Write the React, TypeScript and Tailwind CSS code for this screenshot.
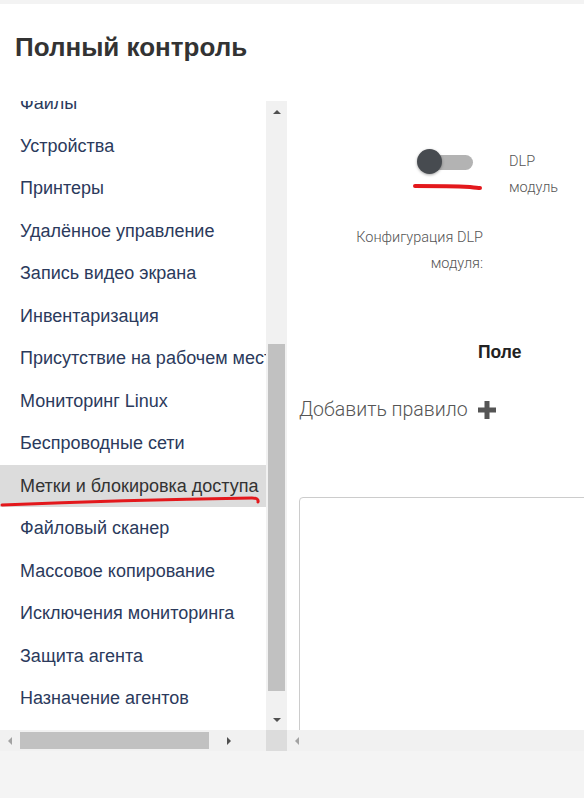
import React from 'react';

const items = [
  'Файлы',
  'Устройства',
  'Принтеры',
  'Удалённое управление',
  'Запись видео экрана',
  'Инвентаризация',
  'Присутствие на рабочем месте',
  'Мониторинг Linux',
  'Беспроводные сети',
  'Метки и блокировка доступа',
  'Файловый сканер',
  'Массовое копирование',
  'Исключения мониторинга',
  'Защита агента',
  'Назначение агентов',
];

const ACTIVE = 'Метки и блокировка доступа';

function Arrow({ dir, light }: { dir: 'up' | 'down' | 'left' | 'right'; light?: boolean }) {
  const fill = light ? '#a3a3a3' : '#505050';
  const pts = {
    up: '0,4 4,0 8,4',
    down: '0,0 8,0 4,4',
    left: '4,0 4,8 0,4',
    right: '0,0 0,8 4,4',
  }[dir];
  const vertical = dir === 'up' || dir === 'down';
  return (
    <svg width={vertical ? 8 : 4} height={vertical ? 4 : 8} viewBox={vertical ? '0 0 8 4' : '0 0 4 8'}>
      <polygon points={pts} fill={fill} />
    </svg>
  );
}

function Toggle() {
  return (
    <div className="relative flex h-[26px] w-[56px] items-center">
      <div className="ml-[1px] h-[15px] w-[55px] rounded-full bg-[#b3b3b3]" />
      <div className="absolute left-0 top-[0px] h-[25px] w-[25px] rounded-full bg-[#474b50] shadow-[0_1px_3px_rgba(0,0,0,0.35)]" />
    </div>
  );
}

export default function App() {
  return (
    <div className="relative flex h-[798px] w-[584px] flex-col overflow-hidden bg-white font-['Liberation_Sans',Arial,sans-serif]">
      <div className="h-[4px] shrink-0 bg-[#f3f3f3]" />

      <div className="h-[97px] shrink-0 pl-[15px] pt-[28px]">
        <h1 className="text-[26px] leading-[30px] font-bold text-[#333]">Полный контроль</h1>
      </div>

      <div className="flex h-[650px] shrink-0">
        {/* left menu */}
        <div className="flex w-[287px] shrink-0 flex-col">
          <div className="flex h-[629px]">
            <div className="w-[266px] overflow-hidden">
              <ul className="mt-[-18.75px]">
                {items.map((t) => (
                  <li
                    key={t}
                    className={
                      t === ACTIVE
                        ? 'flex h-[42.5px] items-center whitespace-nowrap bg-[#dcdcdc] pl-[20px] text-[18px] text-[#333]'
                        : 'flex h-[42.5px] items-center whitespace-nowrap pl-[20px] text-[18px] text-[#2b3a5c]'
                    }
                  >
                    {t}
                  </li>
                ))}
              </ul>
            </div>
            <div className="flex w-[21px] flex-col items-center bg-[#f1f1f1]">
              <div className="flex h-[21px] items-center justify-center">
                <Arrow dir="up" />
              </div>
              <div className="mt-[222px] h-[347px] w-[17px] bg-[#c1c1c1]" />
              <div className="flex-1" />
              <div className="flex h-[21px] items-center justify-center">
                <Arrow dir="down" />
              </div>
            </div>
          </div>
          <div className="flex h-[21px]">
            <div className="flex w-[266px] items-center bg-[#f1f1f1]">
              <div className="flex w-[20px] justify-center">
                <Arrow dir="left" light />
              </div>
              <div className="h-[17px] w-[189px] bg-[#c1c1c1]" />
              <div className="ml-[18px]">
                <Arrow dir="right" />
              </div>
            </div>
            <div className="w-[21px] bg-[#dcdcdc]" />
          </div>
        </div>

        {/* right content */}
        <div className="flex min-w-0 flex-1 flex-col">
          <div className="h-[629px] overflow-hidden pl-[12px] font-['Roboto',sans-serif] text-[#555]">
            <div className="mt-[48px] flex items-start">
              <div className="ml-[118px]">
                <Toggle />
              </div>
              <div className="ml-[36px] text-[14.5px] leading-[26px] font-light">
                <div>DLP</div>
                <div>модуль</div>
              </div>
            </div>

            <div className="mt-[24px] w-[184px] text-right text-[14.5px] leading-[26px] font-light">
              <div>Конфигурация DLP</div>
              <div>модуля:</div>
            </div>

            <div className="mt-[66px] ml-[179px] font-['Liberation_Sans',Arial,sans-serif] text-[17.5px] leading-[18px] font-bold text-[#222]">
              Поле
            </div>

            <div className="mt-[38px] flex items-center gap-[10px] text-[19.5px] leading-[22px] font-light">
              <span>Добавить правило</span>
              <svg width="18" height="18" viewBox="0 0 18 18">
                <rect x="6.5" y="0" width="5" height="18" fill="#555" />
                <rect x="0" y="6.5" width="18" height="5" fill="#555" />
              </svg>
            </div>

            <div className="mt-[76px] h-[300px] w-[320px] rounded-tl-[4px] border border-[#ccc]" />
          </div>
          <div className="flex h-[21px] items-center bg-[#f1f1f1] pl-[8px]">
            <Arrow dir="left" light />
          </div>
        </div>
      </div>

      <div className="flex-1 bg-[#f4f4f4]" />

      {/* hand-drawn annotations */}
      <svg className="pointer-events-none absolute left-0 top-0" width="584" height="798">
        <path d="M415 186 Q450 186 470 187 Q478 188 480 188" stroke="#e3181c" strokeWidth="4" strokeLinecap="round" fill="none" />
        <path d="M2 505 Q120 500 252 498 Q259 498 258 502" stroke="#e3181c" strokeWidth="3" strokeLinecap="round" fill="none" />
      </svg>
    </div>
  );
}
